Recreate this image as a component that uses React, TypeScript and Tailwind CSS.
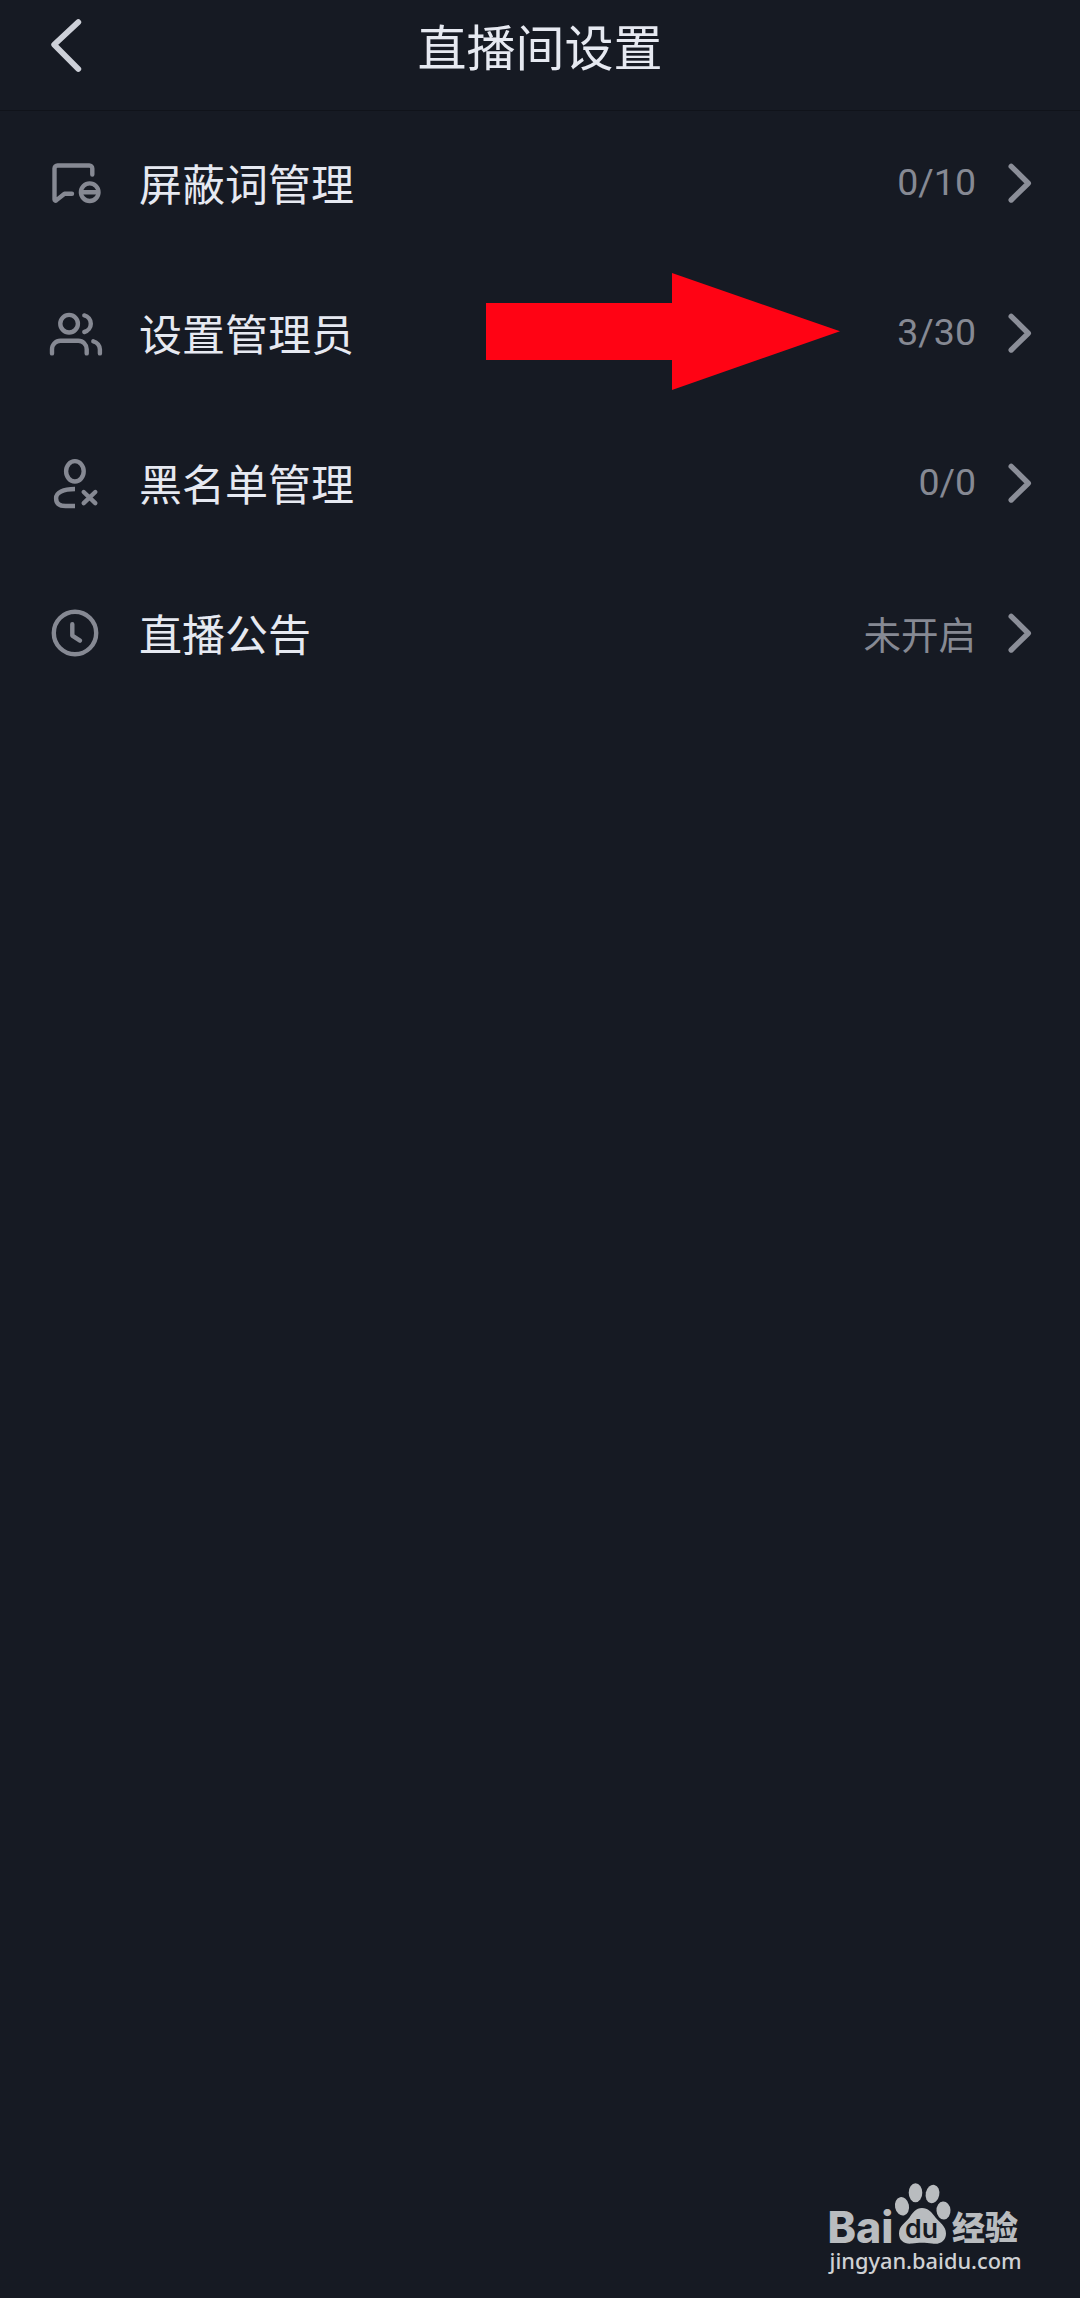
import type { ReactNode } from "react";

type Row = { label: string; value: string; cjkValue?: boolean; icon: ReactNode };

const rows: Row[] = [
  {
    label: "屏蔽词管理",
    value: "0/10",
    icon: (
      <>
        <path d="M44.3 19.6V13.5a3 3 0 0 0-3-3H9.5a3 3 0 0 0-3 3V44.6c0 1 .9 1.4 1.7.8L16.5 38.7H24" />
        <circle cx="41.7" cy="37.2" r="8.8" />
        <path d="M34 37.2H49" />
      </>
    ),
  },
  {
    label: "设置管理员",
    value: "3/30",
    icon: (
      <>
        <circle cx="21.1" cy="18.7" r="8.8" />
        <path d="M36.3 10.4c3.8 1 6.5 4.3 6.5 8.3s-2.7 7.3-6.5 8.3" />
        <path d="M4 48.4V44.2a8.4 8.4 0 0 1 8.4-8.4H30.3a8.4 8.4 0 0 1 8.4 8.4V48.4" />
        <path d="M45.3 36.3c3.9 1 6.6 4.2 6.6 8.2v3.9" />
      </>
    ),
  },
  {
    label: "黑名单管理",
    value: "0/0",
    icon: (
      <>
        <ellipse cx="26.9" cy="16.3" rx="8.8" ry="10.2" />
        <path strokeLinecap="butt" d="M27 34C15 34 8.1 37.5 8.1 43.2S11.5 51 17.5 51H27" />
        <path d="M35.7 37L47.3 48.2M47.3 37L35.7 48.2" />
      </>
    ),
  },
  {
    label: "直播公告",
    value: "未开启",
    cjkValue: true,
    icon: (
      <>
        <circle cx="27" cy="28" r="21.2" />
        <path d="M24.3 19.2V30.6L32 35.6" />
      </>
    ),
  },
];

function Header() {
  return (
    <header className="relative flex h-[111px] items-start justify-center border-b border-[#10131a]">
      <svg className="absolute left-[42px] top-[12px] h-[66px] w-[48px]" viewBox="0 0 48 66" fill="none" stroke="#cdd0d8" strokeWidth="5.8" strokeLinecap="round" strokeLinejoin="round">
        <path d="M36.3 10.2L12.2 32.7L36.3 57" />
      </svg>
      <h1 className="mt-[9px] text-[49px] leading-[72px] text-[#e6e9f1]">直播间设置</h1>
    </header>
  );
}

function SettingRow({ label, value, cjkValue, icon }: Row) {
  return (
    <div className="flex h-[150px] items-center pl-[48px] pr-[44px]">
      <svg className="h-[56px] w-[56px] shrink-0" viewBox="0 0 56 56" fill="none" stroke="#868993" strokeWidth="4.4" strokeLinecap="round" strokeLinejoin="round">
        {icon}
      </svg>
      <span className="ml-[35px] pb-[2px] text-[43px] leading-[60px] text-[#e6e9f1]">{label}</span>
      <span className={cjkValue ? "ml-auto text-[37.5px] leading-[56px] text-[#868993]" : "ml-auto pb-[2px] font-[Roboto] text-[37.5px] leading-[56px] text-[#868993]"}>{value}</span>
      <svg className="ml-[28px] h-[44px] w-[32px] shrink-0" viewBox="0 0 32 44" fill="none" stroke="#8b8e98" strokeWidth="5.4" strokeLinecap="round" strokeLinejoin="round">
        <path d="M7.2 5.4L24.3 22.2L7.2 39" />
      </svg>
    </div>
  );
}

function Watermark() {
  return (
    <div className="absolute left-[826px] top-[2180px] w-[200px] text-[#b9bcbf]">
      <svg className="h-[67px] w-[200px] overflow-visible" viewBox="0 0 200 67" fill="currentColor">
        <text x="1.5" y="62.5" fontFamily="Inter" fontWeight="800" fontSize="43.5" textLength="66" lengthAdjust="spacingAndGlyphs">Bai</text>
        <ellipse cx="76" cy="26.3" rx="7" ry="9.3" transform="rotate(-12 76 26.3)" />
        <ellipse cx="89.5" cy="12.8" rx="6.8" ry="9.5" />
        <ellipse cx="106.5" cy="14" rx="6.8" ry="9.3" transform="rotate(12 106.5 14)" />
        <ellipse cx="117.5" cy="30.5" rx="7" ry="9" transform="rotate(-4 117.5 30.5)" />
        <path d="M96 28C90 28 86.5 33 83.5 37.5C80 42.5 73 45.5 73 53.5C73 61 79 64.5 86 63.5C92 62.5 100 62.5 106 63.5C114 65 120 61 120 53.5C120 46 113.500 42.500 109.500 37.500C105.500 32 102 28 96 28Z" />
        <text x="79" y="58" fontFamily="Inter" fontWeight="600" fontSize="26" fill="#161a23" textLength="33" lengthAdjust="spacingAndGlyphs">du</text>
        <text x="126" y="59.5" fontFamily="Noto Sans CJK SC" fontWeight="900" fontSize="33" textLength="66" lengthAdjust="spacingAndGlyphs">经验</text>
      </svg>
      <div className="-mt-[4px] ml-[3.5px] whitespace-nowrap font-['Noto_Sans'] text-[21.8px] leading-[36px] font-medium text-[#cfd1d4]">jingyan.baidu.com</div>
    </div>
  );
}

export default function App() {
  return (
    <div className="relative h-[2298px] w-[1080px] overflow-hidden bg-[#161a23] font-['Noto_Sans_CJK_SC',sans-serif]">
      <Header />
      <main className="-mt-[3px]">
        {rows.map((row) => (
          <SettingRow key={row.label} {...row} />
        ))}
      </main>
      <svg className="absolute left-[486px] top-[273px] h-[117px] w-[354px]" viewBox="0 0 354 117" fill="#ff0314">
        <path d="M0 30H186V0L354 58.3L186 117V87H0Z" />
      </svg>
      <Watermark />
    </div>
  );
}
